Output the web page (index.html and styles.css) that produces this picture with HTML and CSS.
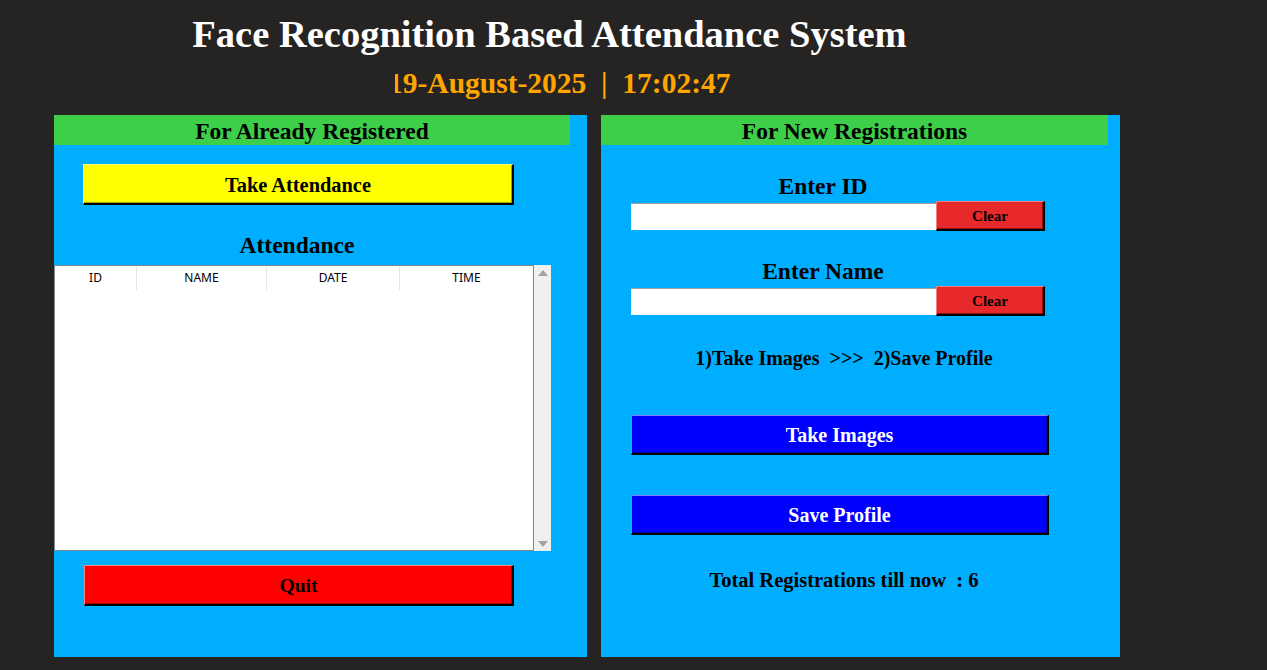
FILE: index.html
```html
<!DOCTYPE html>
<html>
<head>
<meta charset="utf-8">
<link rel="stylesheet" href="styles.css">
</head>
<body>
<header class="top">
  <h1 class="title">Face Recognition Based Attendance System</h1>
  <div class="clock-wrap"><div class="clock">19-August-2025&nbsp;&nbsp;|&nbsp;&nbsp;17:02:47</div></div>
</header>
<main class="panels">
  <section class="panel panel-left">
    <div class="panel-head head-left">For Already Registered</div>
    <button class="btn btn-yellow btn-take-att">Take Attendance</button>
    <div class="label label-att">Attendance</div>
    <div class="table">
      <div class="table-body">
        <div class="thead">
          <div class="th c-id">ID</div>
          <div class="th c-name">NAME</div>
          <div class="th c-date">DATE</div>
          <div class="th c-time">TIME</div>
        </div>
      </div>
      <div class="scrollbar">
        <span class="arrow arrow-up"></span>
        <span class="arrow arrow-down"></span>
      </div>
    </div>
    <button class="btn btn-red btn-quit">Quit</button>
  </section>
  <section class="panel panel-right">
    <div class="panel-head head-right">For New Registrations</div>
    <div class="label label-id">Enter ID</div>
    <div class="entry-row">
      <div class="entry"></div>
      <button class="btn btn-clear">Clear</button>
    </div>
    <div class="label label-name">Enter Name</div>
    <div class="entry-row">
      <div class="entry"></div>
      <button class="btn btn-clear">Clear</button>
    </div>
    <div class="steps">1)Take Images&nbsp;&nbsp;&gt;&gt;&gt;&nbsp;&nbsp;2)Save Profile</div>
    <button class="btn btn-blue btn-take-img">Take Images</button>
    <button class="btn btn-blue btn-save">Save Profile</button>
    <div class="total">Total Registrations till now&nbsp;&nbsp;: 6</div>
  </section>
</main>
</body>
</html>
```

FILE: styles.css
```css
* { box-sizing: border-box; }
html, body { margin: 0; padding: 0; }
body {
  background: #262422;
  width: 1267px;
  height: 670px;
  overflow: hidden;
  font-family: "Liberation Serif", "Times New Roman", serif;
  font-weight: bold;
  color: #000;
}
.top {
  height: 115px;
  padding-top: 12px;
}
.title {
  margin: 0;
  width: 1099px;
  text-align: center;
  color: #ffffff;
  font-size: 38.5px;
  line-height: 44px;
  font-weight: bold;
  white-space: nowrap;
}
.clock-wrap {
  margin-top: 10px;
  margin-left: 395px;
  width: 370px;
  overflow: hidden;
}
.clock {
  margin-left: -7px;
  color: #ffa500;
  font-size: 29.5px;
  line-height: 34px;
  white-space: nowrap;
}
.panels {
  display: flex;
  gap: 14px;
  padding-left: 54px;
}
.panel {
  background: #00aeff;
  height: 542px;
  display: flex;
  flex-direction: column;
  align-items: flex-start;
}
.panel-left { width: 533px; }
.panel-right { width: 519px; }
.panel-head {
  background: #3ecf4a;
  height: 30px;
  font-size: 23.5px;
  line-height: 32px;
  text-align: center;
  white-space: nowrap;
}
.head-left { width: 516px; }
.head-right { width: 507px; }

.btn {
  font-family: "Liberation Serif", "Times New Roman", serif;
  font-weight: bold;
  padding: 2px 0 0;
  border-style: solid;
  border-width: 1px 2px 2px 1px;
  cursor: default;
  white-space: nowrap;
}
.btn-yellow {
  background: #ffff00;
  border-color: #ffff80 #000 #000 #ffff80;
  box-shadow: inset -1px -1px 0 #a0a000;
  color: #000;
}
.btn-red {
  background: #ff0000;
  border-color: #ff8080 #000 #000 #ff8080;
  box-shadow: inset -1px -1px 0 #a00000;
  color: #000;
}
.btn-blue {
  background: #0000ff;
  border-color: #8080ff #000 #000 #8080ff;
  box-shadow: inset -1px -1px 0 #0000a0;
  color: #ffffff;
}
.btn-take-att {
  margin: 19px 0 0 29px;
  width: 431px;
  height: 41px;
  font-size: 20.4px;
}
.label {
  font-size: 23.5px;
  line-height: 26px;
  text-align: center;
  white-space: nowrap;
}
.label-att {
  width: 486px;
  margin-top: 27px;
}
.table {
  margin-top: 7px;
  width: 497px;
  height: 286px;
  display: flex;
  background: #fff;
}
.table-body {
  flex: 1;
  border: 1px solid #828790;
  background: #fff;
}
.thead {
  display: flex;
  height: 24px;
}
.th {
  font-family: "Noto Sans", "Open Sans", sans-serif;
  font-weight: normal;
  font-size: 12px;
  line-height: 24px;
  text-align: center;
  color: #000;
  border-right: 1px solid #e5e5e5;
}
.c-id { width: 82px; }
.c-name { width: 130px; }
.c-date { width: 133px; }
.c-time { flex: 1; border-right: none; }
.scrollbar {
  width: 17px;
  background: #f0f0f0;
  display: flex;
  flex-direction: column;
  justify-content: space-between;
  align-items: center;
  padding: 5px 0 4px;
}
.arrow {
  width: 0;
  height: 0;
  border-left: 5px solid transparent;
  border-right: 5px solid transparent;
}
.arrow-up { border-bottom: 6px solid #a3a3a3; }
.arrow-down { border-top: 6px solid #a3a3a3; }
.btn-quit {
  margin: 14px 0 0 30px;
  width: 430px;
  height: 41px;
  font-size: 19.6px;
}

.label-id {
  width: 444px;
  margin-top: 28px;
}
.label-name {
  width: 444px;
  margin-top: 27px;
}
.entry-row {
  display: flex;
  align-items: center;
  margin: 2px 0 0 30px;
}
.entry {
  width: 305px;
  height: 27px;
  background: #fff;
  border-top: 1px solid #a0a0a0;
}
.btn-clear {
  width: 109px;
  height: 30px;
  background: #e8292b;
  border-color: #f08080 #000 #000 #f08080;
  box-shadow: inset -1px -1px 0 #901010;
  font-size: 15px;
  color: #000;
}
.steps {
  margin-top: 30px;
  width: 486px;
  text-align: center;
  font-size: 20px;
  line-height: 24px;
  white-space: nowrap;
}
.btn-take-img {
  margin: 45px 0 0 30px;
  width: 418px;
  height: 40px;
  font-size: 20px;
}
.btn-save {
  margin: 40px 0 0 30px;
  width: 418px;
  height: 40px;
  font-size: 20px;
}
.total {
  margin-top: 33px;
  width: 486px;
  text-align: center;
  font-size: 20.5px;
  line-height: 24px;
  white-space: nowrap;
}
```
